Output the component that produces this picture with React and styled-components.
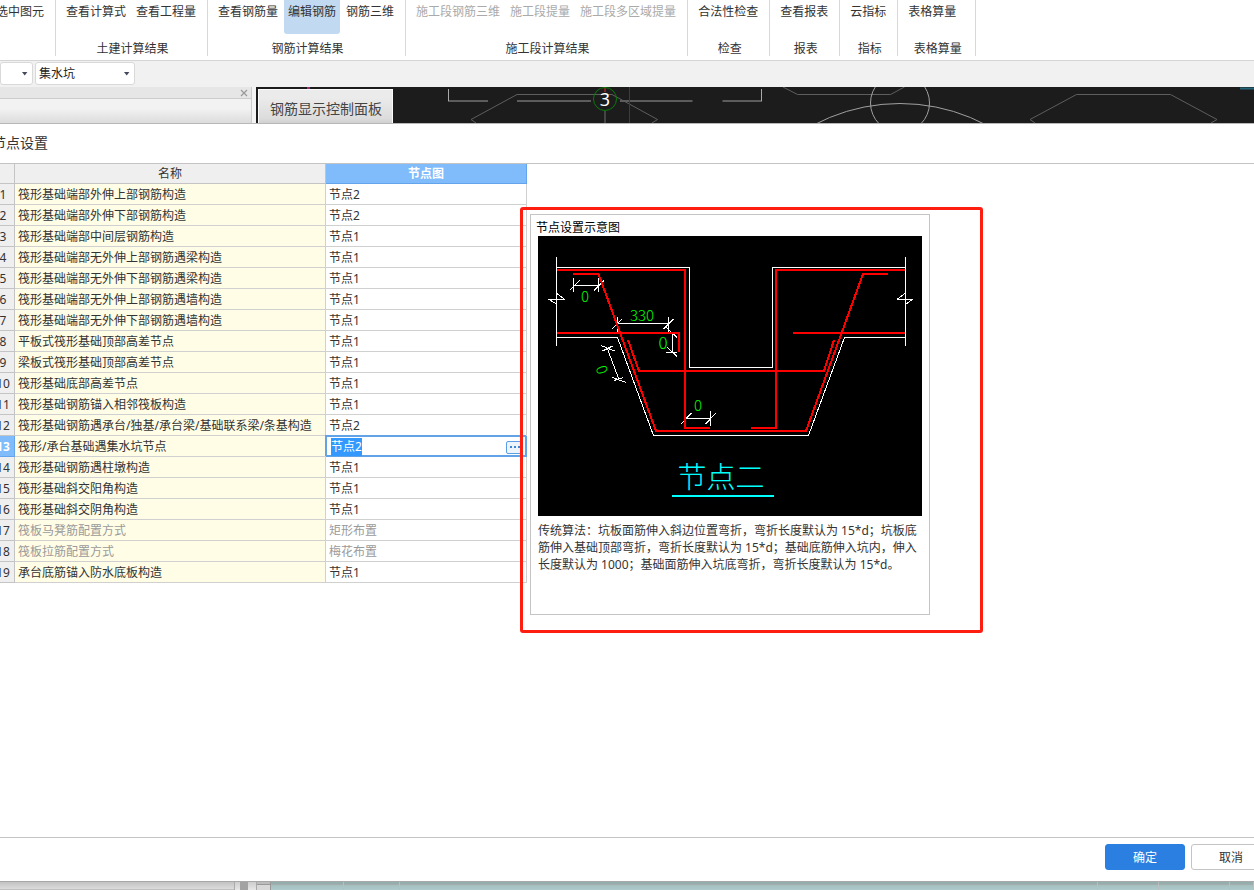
import React, { useEffect, useRef } from "react";
import styled, { createGlobalStyle, css } from "styled-components";

const GlobalStyle = createGlobalStyle`
  * {
    box-sizing: border-box;
  }

  body {
    margin: 0;
    background: #fff;
    color: #333;
    font-family: "Noto Sans", "Noto Sans CJK SC", sans-serif;
    font-size: 12px;
    line-height: 18px;
  }

  button, input, select {
    font: inherit;
    color: inherit;
    margin: 0;
    padding: 0;
  }
`;

const Page = styled.div`
  display: flex;
  flex-direction: column;
  min-height: 100vh;
  overflow: hidden;
`;

/* ribbon */

const Ribbon = styled.header`
  display: flex;
  height: 61px;
  padding-bottom: 4px;
  border-bottom: 1px solid #d5d5d5;
  overflow: hidden;
`;

const Group = styled.section`
  display: flex;
  flex-direction: column;
  justify-content: space-between;
  flex: none;
  width: ${(p) => (p.$width ? `${p.$width}px` : "auto")};
  padding: 0 7px 0 6px;
  border-right: 1px solid #d8d8d8;
`;

const GroupTools = styled.div`
  display: flex;
  justify-content: ${(p) => (p.$end ? "flex-end" : "flex-start")};
  gap: 2px;
`;

const Tool = styled.button`
  flex: none;
  height: 34px;
  padding: 3px 4px 13px;
  border: none;
  border-radius: 0 0 3px 3px;
  background: ${(p) => (p.$active ? "#c2d9f2" : "transparent")};
  line-height: 18px;
  white-space: nowrap;

  &:disabled {
    color: #aaa;
  }
`;

const GroupLabel = styled.div`
  padding-left: 3px;
  line-height: 14px;
  text-align: center;
  white-space: nowrap;
`;

/* toolbar */

const Toolbar = styled.div`
  display: flex;
  align-items: flex-start;
  gap: 2px;
  height: 26px;
  padding-top: 1px;
  background: #f1f1f1;
`;

const SelectBox = styled.label`
  position: relative;
  display: block;
  width: ${(p) => p.$width}px;

  svg {
    position: absolute;
    right: 5px;
    top: 10px;
    pointer-events: none;
  }
`;

const Select = styled.select`
  appearance: none;
  display: block;
  width: 100%;
  height: 23px;
  padding: 0 3px;
  border: 1px solid #d9d9d9;
  border-radius: 3px;
  background: #fff;
  color: #222;
`;

/* strip of the main window above the dialog */

const WorkArea = styled.div`
  display: flex;
  height: 36px;
  background: #f4f4f4;
`;

const Dock = styled.div`
  flex: none;
  width: 252px;
  margin-right: 4px;
  border-right: 1px solid #ccc;
  background: linear-gradient(#f2f2f2 60%, #dcdcdc);
`;

const DockBar = styled.div`
  display: flex;
  justify-content: flex-end;
  align-items: center;
  height: 12px;
  padding-right: 3px;
  border-bottom: 1px solid #ccc;
  background: #e6e6e6;
`;

const CloseButton = styled.button`
  display: flex;
  border: none;
  background: none;
`;

const Viewport = styled.div`
  position: relative;
  flex: 1;
  background: #1c1c1c;
  overflow: hidden;

  svg {
    display: block;
  }
`;

const FloatingPanel = styled.div`
  position: absolute;
  left: 2px;
  top: 2px;
  width: 135px;
  height: 40px;
  padding: 9px 0 0 11px;
  border: 1px solid #fafafa;
  background: linear-gradient(#ebebeb 20%, #dcdcdc 75%, #c4c4c4);
  color: #444;
  font-size: 14px;
  line-height: 20px;
  white-space: nowrap;
`;

/* dialog: a bit wider than the window on both sides */

const Dialog = styled.main`
  display: flex;
  flex-direction: column;
  flex: 1;
  margin: 0 -25px 0 -8px;
  border-top: 1px solid #b8b8b8;
  background: #fff;
`;

const DialogTitle = styled.h1`
  margin: 0;
  height: 40px;
  border-bottom: 1px solid #c4c4c4;
  font-size: 14px;
  font-weight: 400;
  line-height: 38px;
`;

const DialogBody = styled.div`
  display: flex;
  align-items: flex-start;
  flex: 1;
`;

const DialogFooter = styled.footer`
  display: flex;
  align-items: flex-start;
  justify-content: flex-end;
  gap: 6px;
  height: 44px;
  padding: 6px 8px 0 0;
  border-top: 1px solid #c4c4c4;
`;

const DialogButton = styled.button`
  width: 80px;
  height: 26px;
  padding-top: 2px;
  border: 1px solid ${(p) => (p.$primary ? "#2b7fe0" : "#c4c4c4")};
  border-radius: 3px;
  background: ${(p) => (p.$primary ? "#2b7fe0" : "#fff")};
  color: ${(p) => (p.$primary ? "#fff" : "#333")};
`;

/* node table */

const Table = styled.table`
  flex: none;
  width: 535px;
  table-layout: fixed;
  border-collapse: separate;
  border-spacing: 0;
`;

const cell = css`
  height: 21px;
  padding: 2px 3px 0;
  border-right: 1px solid #d0d0d0;
  border-bottom: 1px solid #d0d0d0;
  font-weight: 400;
  text-align: left;
  white-space: nowrap;
`;

const HeadCell = styled.th`
  ${cell}
  height: 20px;
  padding-top: 1px;
  border-color: ${(p) => (p.$active ? "#64a4ea" : "#c4c4c4")};
  background: ${(p) => (p.$active ? "#80bbfb" : "#efefef")};
  color: ${(p) => (p.$active ? "#fff" : "#333")};
  font-weight: ${(p) => (p.$active ? 700 : 400)};
  text-align: center;
`;

const NumberCell = styled.th`
  ${cell}
  padding: 2px 0 0;
  border-color: ${(p) => (p.$active ? "#64a4ea" : "#c4c4c4")};
  background: ${(p) => (p.$active ? "#80bbfb" : "#efefef")};
  color: ${(p) => (p.$active ? "#fff" : "#333")};
  font-weight: ${(p) => (p.$active ? 700 : 400)};
  text-align: center;
`;

const NameCell = styled.td`
  ${cell}
  background: #fffde6;
  color: ${(p) => (p.$muted ? "#9a9a9a" : "#333")};
`;

const ValueCell = styled.td`
  ${cell}
  color: ${(p) => (p.$muted ? "#9a9a9a" : "#333")};
  ${(p) =>
    p.$active &&
    css`
      border-color: #62a3e8;
      box-shadow:
        -1px -1px 0 #62a3e8,
        inset 1px 1px 0 #62a3e8,
        inset -1px -1px 0 #62a3e8;
    `}
`;

const Editor = styled.div`
  display: flex;
  align-items: center;
  gap: 4px;
  padding-left: 2px;
`;

const EditorInput = styled.input`
  flex: 1;
  min-width: 0;
  height: 18px;
  border: none;
  outline: none;
  background: transparent;
  line-height: 18px;

  &::selection {
    background: #3399ff;
    color: #fff;
  }
`;

const MoreButton = styled.button`
  display: flex;
  align-items: center;
  justify-content: center;
  width: 17px;
  height: 13px;
  border: 1px solid #5b9ee4;
  border-radius: 2px;
  background: #eef4fb;
`;

/* preview */

const Preview = styled.aside`
  position: relative;
  flex: none;
  width: 400px;
  min-height: 401px;
  margin: 50px 0 0 3px;
  padding: 4px 7px;
  border: 1px solid #c4c4c4;

  &::after {
    content: "";
    position: absolute;
    inset: -8px -54px -19px -11px;
    border: 3px solid #ff1d10;
    border-radius: 3px;
    pointer-events: none;
  }
`;

const Figure = styled.figure`
  display: flex;
  flex-direction: column;
  margin: 0;

  svg {
    display: block;
    background: #000;
  }
`;

const FigureTitle = styled.figcaption`
  margin-left: -2px;
  height: 17px;
  color: #000;
`;

const Note = styled.p`
  margin: 6px 0 0;
  line-height: 17px;
`;

/* strip of the main window below the dialog */

const BottomStrip = styled.div`
  display: flex;
  height: 9px;
  border-top: 1px solid #a8a8a8;
`;

const BottomDock = styled.div`
  flex: none;
  width: 235px;
  border-right: 1px solid #aaa;
  background: linear-gradient(#c2c2c2, #dcdcdc 7px, #c0c0c0 7px);
`;

const Splitter = styled.div`
  display: flex;
  flex: none;
  width: 22px;
  padding: 0 3px 0 5px;
  border-right: 1px solid #aaa;
  background: linear-gradient(#cdcdcd, #e6e6e6);

  &::before {
    content: "";
    width: 8px;
    background: #a2a2a2;
  }
`;

const SheetCorner = styled.div`
  flex: none;
  width: 14px;
  border-right: 1px solid #999;
  background: linear-gradient(#bcbcbc 2px, #999 2px, #999 3px, #d8d8d8 3px);
`;

const SheetCell = styled.div`
  flex: ${(p) => (p.$width ? `0 0 ${p.$width}px` : "1")};
  border-right: 1px solid #b9bfbf;
  background: linear-gradient(#94aead 2px, #a3adad 2px, #a3adad 3px, #a5bfbf 3px, #aecaca);
`;

const groups = [
  { label: "", width: 56, end: true, tools: [{ name: "选中图元" }] },
  { label: "土建计算结果", tools: [{ name: "查看计算式" }, { name: "查看工程量" }] },
  {
    label: "钢筋计算结果",
    tools: [{ name: "查看钢筋量" }, { name: "编辑钢筋", active: true }, { name: "钢筋三维" }],
  },
  {
    label: "施工段计算结果",
    tools: [
      { name: "施工段钢筋三维", disabled: true },
      { name: "施工段提量", disabled: true },
      { name: "施工段多区域提量", disabled: true },
    ],
  },
  { label: "检查", tools: [{ name: "合法性检查" }] },
  { label: "报表", tools: [{ name: "查看报表" }] },
  { label: "指标", tools: [{ name: "云指标" }] },
  { label: "表格算量", width: 78, tools: [{ name: "表格算量" }] },
];

const rows = [
  { name: "筏形基础端部外伸上部钢筋构造", value: "节点2" },
  { name: "筏形基础端部外伸下部钢筋构造", value: "节点2" },
  { name: "筏形基础端部中间层钢筋构造", value: "节点1" },
  { name: "筏形基础端部无外伸上部钢筋遇梁构造", value: "节点1" },
  { name: "筏形基础端部无外伸下部钢筋遇梁构造", value: "节点1" },
  { name: "筏形基础端部无外伸上部钢筋遇墙构造", value: "节点1" },
  { name: "筏形基础端部无外伸下部钢筋遇墙构造", value: "节点1" },
  { name: "平板式筏形基础顶部高差节点", value: "节点1" },
  { name: "梁板式筏形基础顶部高差节点", value: "节点1" },
  { name: "筏形基础底部高差节点", value: "节点1" },
  { name: "筏形基础钢筋锚入相邻筏板构造", value: "节点1" },
  { name: "筏形基础钢筋遇承台/独基/承台梁/基础联系梁/条基构造", value: "节点2" },
  { name: "筏形/承台基础遇集水坑节点", value: "节点2", active: true },
  { name: "筏形基础钢筋遇柱墩构造", value: "节点1" },
  { name: "筏形基础斜交阳角构造", value: "节点1" },
  { name: "筏形基础斜交阴角构造", value: "节点1" },
  { name: "筏板马凳筋配置方式", value: "矩形布置", muted: true },
  { name: "筏板拉筋配置方式", value: "梅花布置", muted: true },
  { name: "承台底筋锚入防水底板构造", value: "节点1" },
];

const Arrow = () => (
  <svg width="6" height="4" viewBox="0 0 6 4" aria-hidden="true">
    <path d="M0 0H5.4L2.7 3.4Z" fill="#444a5c" />
  </svg>
);

const ViewportDrawing = () => (
  <svg width="998" height="36" viewBox="0 0 998 36" fill="none" aria-hidden="true">
    <path d="M52.500 0V2" stroke="#a02a80" strokeWidth="3" />
    <g stroke="#5e5e5e">
      <path d="M220 36L215 32.500L261 7.500H356L401.500 32.500L396 36" />
      <path d="M527 0L541.500 7.500H634.500L648.500 0" />
      <path d="M779 36L774 32.500L820.500 7.500H914.500L961 32.500L955 36" />
    </g>
    <g stroke="#5c5c5c" strokeWidth="2">
      <path d="M192 14H232M261 14H335M364 14H436.500M466.500 14H506" />
      <path d="M349 24V36" stroke="#444" />
    </g>
    <path d="M192.500 2V14M505.500 2V14" stroke="#aaa" />
    <path d="M373.500 0V36" stroke="#7d2222" />
    <path d="M349 0V5" stroke="#7d2222" strokeWidth="2" />
    <circle cx="349" cy="12" r="11.500" stroke="#0a7a0a" />
    <g stroke="#a0a0a0">
      <circle cx="644" cy="16" r="29.500" />
      <circle cx="644" cy="200.500" r="184" />
    </g>
    <path d="M984 1.500H998" stroke="#246478" strokeWidth="2" />
    <text x="349" y="19" textAnchor="middle" fill="#fff" fontSize="18" fontFamily="Noto Sans">
      3
    </text>
  </svg>
);

const NodeDrawing = () => (
  <svg width="384" height="280" viewBox="0 0 384 280" fill="none" role="img" aria-label="节点二">
    <g stroke="#fff" shapeRendering="crispEdges">
      {/* concrete outline */}
      <path d="M18.500 21V110M367.500 21V110" />
      <path d="M18.500 31.500H151.500V131.500H234.500V31.500H367.500" />
      <path d="M18.500 101.500H79.500L115.500 199.500H270.500L306.500 101.500H367.500" />
      {/* break marks */}
      <path d="M10 63.500H27M19 57.500L27 63.500M11 63.500L18.500 68" />
      <path d="M359 63.500H375M367 57.500L359 63.500M374.500 63.500L368 68" />
      {/* dimensions */}
      <path d="M35.500 42V56M60.500 42V56M35.500 49.500H60.500M31.500 54.500L41.500 44.500M56 54.500L66 44.500" />
      <path d="M79.500 81V96M130.500 81V96M79.500 87.500H130.500M73.500 93.500L83.500 83.500M125.500 93L135.500 83" />
      <path d="M134.500 97V117M128 116.500H139M129.500 111.500L139 120.500M128.500 91.500L139 101.500" />
      <path d="M69.500 113L81 143.500M63 109.500L76.500 115M64.500 115L74.500 110M74.500 141.500L88 146.500M76 144.500L85.500 141.500" />
      <path d="M148 182.500H172.500V175V190M143 188L153.500 177M167.500 188L178 177" />
    </g>
    <g stroke="#f00" strokeWidth="2" shapeRendering="crispEdges">
      <path d="M19 34H147V192H172" />
      <path d="M367 34H238V192H213" />
      <path d="M35 38H60.500L118 195H268L325 38H350" />
      <path d="M19 97H141V116M255 97H367" />
      <path d="M90 104L101 135H286L296 104" />
    </g>
    <g fill="#0f0" fontFamily="Noto Sans CJK SC" fontWeight="300" fontSize="15" textAnchor="middle">
      <text x="47" y="66">0</text>
      <text x="104" y="85">330</text>
      <text x="125" y="113" fontSize="17">0</text>
      <text x="160" y="175">0</text>
      <text transform="translate(69 132) rotate(-110)">0</text>
    </g>
    <text
      x="183"
      y="252"
      fill="#0ff"
      fontFamily="Noto Sans CJK SC"
      fontWeight="300"
      fontSize="29"
      textAnchor="middle"
    >
      节点二
    </text>
    <path d="M134 260H236" stroke="#0ff" strokeWidth="2" />
  </svg>
);

const NodeEditor = ({ value }) => {
  const input = useRef(null);

  useEffect(() => {
    input.current.focus();
    input.current.select();
  }, []);

  return (
    <Editor>
      <EditorInput ref={input} defaultValue={value} aria-label="节点图" />
      <MoreButton type="button" aria-label="选择节点图">
        <svg width="12" height="2" viewBox="0 0 12 2" aria-hidden="true">
          <path d="M1 0h2v2h-2zM5 0h2v2h-2zM9 0h2v2h-2z" fill="#3c86d8" />
        </svg>
      </MoreButton>
    </Editor>
  );
};

const App = () => (
  <Page>
    <GlobalStyle />
    <Ribbon>
      {groups.map((group, i) => (
        <Group key={i} $width={group.width}>
          <GroupTools $end={group.end}>
            {group.tools.map((tool) => (
              <Tool key={tool.name} type="button" $active={tool.active} disabled={tool.disabled}>
                {tool.name}
              </Tool>
            ))}
          </GroupTools>
          <GroupLabel>{group.label}</GroupLabel>
        </Group>
      ))}
    </Ribbon>

    <Toolbar>
      <SelectBox $width={33}>
        <Select aria-label="楼层">
          <option></option>
        </Select>
        <Arrow />
      </SelectBox>
      <SelectBox $width={100}>
        <Select aria-label="构件类型">
          <option>集水坑</option>
        </Select>
        <Arrow />
      </SelectBox>
    </Toolbar>

    <WorkArea>
      <Dock>
        <DockBar>
          <CloseButton type="button" aria-label="关闭">
            <svg width="8" height="8" viewBox="0 0 8 8" aria-hidden="true">
              <path d="M1 1L7 7M7 1L1 7" stroke="#999" strokeWidth="1.200" />
            </svg>
          </CloseButton>
        </DockBar>
      </Dock>
      <Viewport>
        <ViewportDrawing />
        <FloatingPanel>钢筋显示控制面板</FloatingPanel>
      </Viewport>
    </WorkArea>

    <Dialog>
      <DialogTitle>节点设置</DialogTitle>
      <DialogBody>
        <Table>
          <colgroup>
            <col width="23" />
            <col width="311" />
            <col width="201" />
          </colgroup>
          <thead>
            <tr>
              <HeadCell />
              <HeadCell>名称</HeadCell>
              <HeadCell $active>节点图</HeadCell>
            </tr>
          </thead>
          <tbody>
            {rows.map((row, i) => (
              <tr key={row.name}>
                <NumberCell scope="row" $active={row.active}>
                  {i + 1}
                </NumberCell>
                <NameCell $muted={row.muted}>{row.name}</NameCell>
                <ValueCell $muted={row.muted} $active={row.active}>
                  {row.active ? <NodeEditor value={row.value} /> : row.value}
                </ValueCell>
              </tr>
            ))}
          </tbody>
        </Table>
        <Preview>
          <Figure>
            <FigureTitle>节点设置示意图</FigureTitle>
            <NodeDrawing />
          </Figure>
          <Note>
            传统算法：坑板面筋伸入斜边位置弯折，弯折长度默认为 15*d；坑板底筋伸入基础顶部弯折，弯折长度默认为
            15*d；基础底筋伸入坑内，伸入长度默认为 1000；基础面筋伸入坑底弯折，弯折长度默认为 15*d。
          </Note>
        </Preview>
      </DialogBody>
      <DialogFooter>
        <DialogButton type="button" $primary>
          确定
        </DialogButton>
        <DialogButton type="button">取消</DialogButton>
      </DialogFooter>
    </Dialog>

    <BottomStrip>
      <BottomDock />
      <Splitter />
      <SheetCorner />
      <SheetCell $width={73} />
      <SheetCell $width={56} />
      <SheetCell />
      <SheetCell $width={61} />
      <SheetCell $width={71} />
      <SheetCell $width={24} />
    </BottomStrip>
  </Page>
);

export default App;
